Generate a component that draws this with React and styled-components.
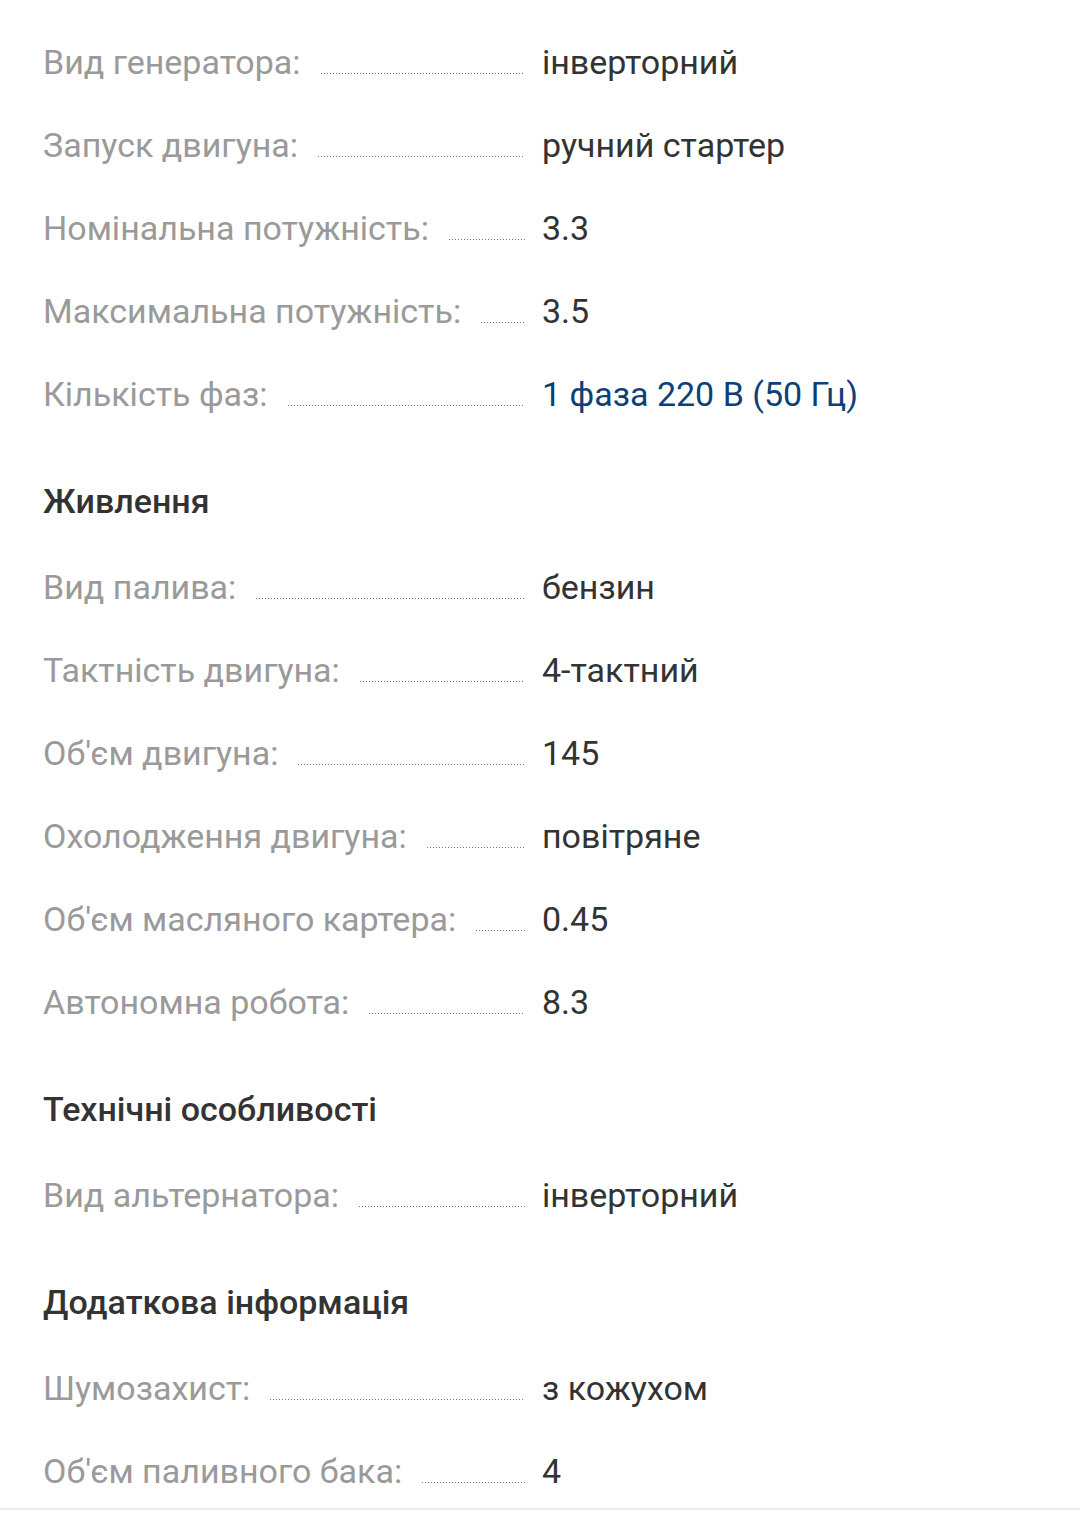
import React from "react";
import styled, { createGlobalStyle } from "styled-components";

const Global = createGlobalStyle`
  html, body { margin: 0; padding: 0; background: #fff; }
  body { font-family: Roboto, "Noto Sans", sans-serif; }
`;

const Page = styled.div`
  padding: 21px 0 0 0;
  border-bottom: 2px solid #ececec;
  height: 1510px;
  box-sizing: border-box;
`;

const Group = styled.section``;

const Heading = styled.h3`
  margin: 24px 0 3px 43px;
  height: 83px;
  line-height: 83px;
  font-size: 34px;
  font-weight: 500;
  color: #333;
`;

const Row = styled.div`
  display: flex;
  align-items: baseline;
  height: 83px;
  line-height: 83px;
  padding-left: 43px;
  font-size: 34px;
`;

const LabelCell = styled.div`
  display: flex;
  align-items: baseline;
  width: 482px;
  flex: none;
`;

const Label = styled.span`
  color: #9a9a9a;
  white-space: nowrap;
`;

const Leader = styled.span`
  flex: 1;
  margin-left: 20px;
  margin-bottom: -1px;
  height: 1px;
  background-image: linear-gradient(to right, #7a7a7a 1px, transparent 1px);
  background-size: 3px 1px;
  background-repeat: repeat-x;
`;

const Value = styled.span`
  margin-left: 17px;
  color: ${(p) => (p.$link ? "#0d3f79" : "#333")};
  white-space: nowrap;
`;

const groups = [
  {
    title: null,
    rows: [
      ["Вид генератора:", "інверторний"],
      ["Запуск двигуна:", "ручний стартер"],
      ["Номінальна потужність:", "3.3"],
      ["Максимальна потужність:", "3.5"],
      ["Кількість фаз:", "1 фаза 220 В (50 Гц)", true],
    ],
  },
  {
    title: "Живлення",
    rows: [
      ["Вид палива:", "бензин"],
      ["Тактність двигуна:", "4-тактний"],
      ["Об'єм двигуна:", "145"],
      ["Охолодження двигуна:", "повітряне"],
      ["Об'єм масляного картера:", "0.45"],
      ["Автономна робота:", "8.3"],
    ],
  },
  {
    title: "Технічні особливості",
    rows: [["Вид альтернатора:", "інверторний"]],
  },
  {
    title: "Додаткова інформація",
    rows: [
      ["Шумозахист:", "з кожухом"],
      ["Об'єм паливного бака:", "4"],
    ],
  },
];

export default function App() {
  return (
    <>
      <Global />
      <Page>
        {groups.map((g, i) => (
          <Group key={i}>
            {g.title && <Heading>{g.title}</Heading>}
            {g.rows.map(([l, v, link]) => (
              <Row key={l}>
                <LabelCell>
                  <Label>{l}</Label>
                  <Leader />
                </LabelCell>
                <Value $link={link}>{v}</Value>
              </Row>
            ))}
          </Group>
        ))}
      </Page>
    </>
  );
}
